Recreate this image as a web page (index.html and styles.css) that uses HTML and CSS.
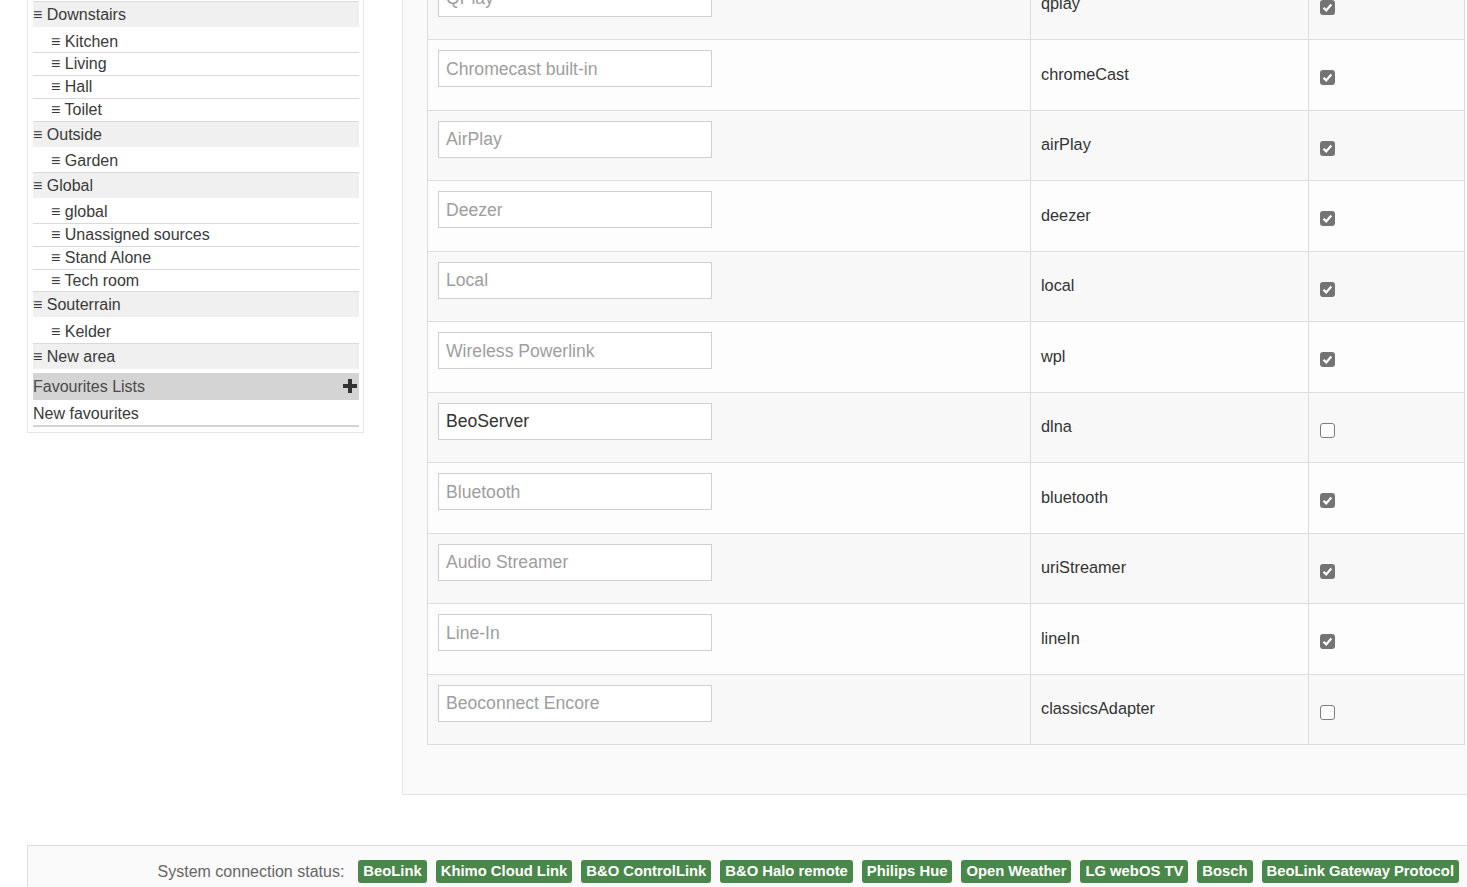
FILE: index.html
```html
<!DOCTYPE html>
<html lang="en">
<head>
<meta charset="utf-8">
<title>Sources</title>
<link rel="stylesheet" href="styles.css">
</head>
<body>
<div class="page">
  <div class="top">
    <aside class="sidebar">
      <ul class="areas">
        <li class="area">
          <div class="area-head">≡ Downstairs</div>
          <ul class="zones">
            <li>≡ Kitchen</li>
            <li>≡ Living</li>
            <li>≡ Hall</li>
            <li>≡ Toilet</li>
          </ul>
        </li>
        <li class="area">
          <div class="area-head">≡ Outside</div>
          <ul class="zones">
            <li>≡ Garden</li>
          </ul>
        </li>
        <li class="area">
          <div class="area-head">≡ Global</div>
          <ul class="zones">
            <li>≡ global</li>
            <li>≡ Unassigned sources</li>
            <li>≡ Stand Alone</li>
            <li>≡ Tech room</li>
          </ul>
        </li>
        <li class="area">
          <div class="area-head">≡ Souterrain</div>
          <ul class="zones">
            <li>≡ Kelder</li>
          </ul>
        </li>
        <li class="area">
          <div class="area-head">≡ New area</div>
        </li>
      </ul>
      <div class="fav-head">
        <span>Favourites Lists</span>
        <svg class="plus" width="14" height="14" viewBox="0 0 14 14"><rect x="5" y="0" width="4" height="14" fill="#333"/><rect x="0" y="5" width="14" height="4" fill="#333"/></svg>
      </div>
      <div class="fav-item">New favourites</div>
    </aside>

    <main class="content">
      <div class="src-table">
        <div class="src-row">
          <div class="cell name"><input class="field" type="text" placeholder="QPlay"></div>
          <div class="cell key">qplay</div>
          <div class="cell chk"><span class="check on"><svg width="15" height="15" viewBox="0 0 15 15"><path d="M3.5 7.8 L6.2 10.4 L11.3 4.6" fill="none" stroke="#fff" stroke-width="2.2"/></svg></span></div>
        </div>
        <div class="src-row">
          <div class="cell name"><input class="field" type="text" placeholder="Chromecast built-in"></div>
          <div class="cell key">chromeCast</div>
          <div class="cell chk"><span class="check on"><svg width="15" height="15" viewBox="0 0 15 15"><path d="M3.5 7.8 L6.2 10.4 L11.3 4.6" fill="none" stroke="#fff" stroke-width="2.2"/></svg></span></div>
        </div>
        <div class="src-row">
          <div class="cell name"><input class="field" type="text" placeholder="AirPlay"></div>
          <div class="cell key">airPlay</div>
          <div class="cell chk"><span class="check on"><svg width="15" height="15" viewBox="0 0 15 15"><path d="M3.5 7.8 L6.2 10.4 L11.3 4.6" fill="none" stroke="#fff" stroke-width="2.2"/></svg></span></div>
        </div>
        <div class="src-row">
          <div class="cell name"><input class="field" type="text" placeholder="Deezer"></div>
          <div class="cell key">deezer</div>
          <div class="cell chk"><span class="check on"><svg width="15" height="15" viewBox="0 0 15 15"><path d="M3.5 7.8 L6.2 10.4 L11.3 4.6" fill="none" stroke="#fff" stroke-width="2.2"/></svg></span></div>
        </div>
        <div class="src-row">
          <div class="cell name"><input class="field" type="text" placeholder="Local"></div>
          <div class="cell key">local</div>
          <div class="cell chk"><span class="check on"><svg width="15" height="15" viewBox="0 0 15 15"><path d="M3.5 7.8 L6.2 10.4 L11.3 4.6" fill="none" stroke="#fff" stroke-width="2.2"/></svg></span></div>
        </div>
        <div class="src-row">
          <div class="cell name"><input class="field" type="text" placeholder="Wireless Powerlink"></div>
          <div class="cell key">wpl</div>
          <div class="cell chk"><span class="check on"><svg width="15" height="15" viewBox="0 0 15 15"><path d="M3.5 7.8 L6.2 10.4 L11.3 4.6" fill="none" stroke="#fff" stroke-width="2.2"/></svg></span></div>
        </div>
        <div class="src-row">
          <div class="cell name"><input class="field" type="text" value="BeoServer"></div>
          <div class="cell key">dlna</div>
          <div class="cell chk"><span class="check off"></span></div>
        </div>
        <div class="src-row">
          <div class="cell name"><input class="field" type="text" placeholder="Bluetooth"></div>
          <div class="cell key">bluetooth</div>
          <div class="cell chk"><span class="check on"><svg width="15" height="15" viewBox="0 0 15 15"><path d="M3.5 7.8 L6.2 10.4 L11.3 4.6" fill="none" stroke="#fff" stroke-width="2.2"/></svg></span></div>
        </div>
        <div class="src-row">
          <div class="cell name"><input class="field" type="text" placeholder="Audio Streamer"></div>
          <div class="cell key">uriStreamer</div>
          <div class="cell chk"><span class="check on"><svg width="15" height="15" viewBox="0 0 15 15"><path d="M3.5 7.8 L6.2 10.4 L11.3 4.6" fill="none" stroke="#fff" stroke-width="2.2"/></svg></span></div>
        </div>
        <div class="src-row">
          <div class="cell name"><input class="field" type="text" placeholder="Line-In"></div>
          <div class="cell key">lineIn</div>
          <div class="cell chk"><span class="check on"><svg width="15" height="15" viewBox="0 0 15 15"><path d="M3.5 7.8 L6.2 10.4 L11.3 4.6" fill="none" stroke="#fff" stroke-width="2.2"/></svg></span></div>
        </div>
        <div class="src-row">
          <div class="cell name"><input class="field" type="text" placeholder="Beoconnect Encore"></div>
          <div class="cell key">classicsAdapter</div>
          <div class="cell chk"><span class="check off"></span></div>
        </div>
      </div>
    </main>
  </div>

  <footer class="status">
    <span class="status-label">System connection status:</span>
    <span class="badge">BeoLink</span>
    <span class="badge">Khimo Cloud Link</span>
    <span class="badge">B&amp;O ControlLink</span>
    <span class="badge">B&amp;O Halo remote</span>
    <span class="badge">Philips Hue</span>
    <span class="badge">Open Weather</span>
    <span class="badge">LG webOS TV</span>
    <span class="badge">Bosch</span>
    <span class="badge">BeoLink Gateway Protocol</span>
  </footer>
</div>
</body>
</html>
```

FILE: styles.css
```css
html, body {
  margin: 0;
  padding: 0;
  overflow: hidden;
  background: #fff;
}

body {
  font-family: "Liberation Sans", Arial, Helvetica, sans-serif;
  font-size: 16px;
  color: #333;
  width: 1467px;
  height: 887px;
}

.page {
  width: 1467px;
}

/* page is scrolled: top part hidden above the viewport */
.top {
  display: flex;
  align-items: flex-start;
  margin-top: -60px;
  padding-left: 27px;
  gap: 38px;
}

/* ---------- sidebar ---------- */
.sidebar {
  flex: none;
  width: 337px;
  box-sizing: border-box;
  border: 1px solid #e6e6e6;
  padding: 60px 4px 5px 5px;
  background: #fff;
}

.areas, .zones {
  list-style: none;
  margin: 0;
  padding: 0;
}

.areas {
  border-top: 1px solid #dcdcdc;
}

.area-head {
  height: 25px;
  line-height: 25px;
  background: #f0f0f0;
  color: #3a3a3a;
  white-space: nowrap;
}

.zones {
  padding-top: 3.5px;
}

.zones li {
  height: 22.75px;
  box-sizing: border-box;
  line-height: 21px;
  padding-left: 18px;
  border-bottom: 1px solid #d9d9d9;
  color: #3a3a3a;
  white-space: nowrap;
}

.fav-head {
  margin-top: 4px;
  height: 27px;
  background: #d4d4d4;
  display: flex;
  align-items: center;
  justify-content: space-between;
  padding-right: 2px;
  padding-top: 2px;
  box-sizing: border-box;
  color: #4a4a4a;
}

.plus {
  display: block;
  margin-top: -2px;
}

.fav-item {
  height: 25px;
  line-height: 27px;
  border-bottom: 2px solid #d4d4d4;
  color: #3a3a3a;
}

/* ---------- main content ---------- */
.content {
  flex: none;
  width: 1088px;
  box-sizing: border-box;
  border: 1px solid #e3e3e3;
  background: #fafafa;
  padding: 27.5px 24px 48.5px 24px;
}

.src-table {
  width: 1038px;
  box-sizing: border-box;
  border-left: 1px solid #ddd;
  border-right: 1px solid #ddd;
  border-bottom: 1px solid #ddd;
}

.src-row {
  display: grid;
  grid-template-columns: 602px 278px 156px;
  height: 70.5px;
  box-sizing: border-box;
  border-top: 1px solid #ddd;
  background: #fdfdfd;
}

.src-row:nth-child(odd) {
  background: #f8f8f8;
}

.cell {
  box-sizing: border-box;
}

.cell + .cell {
  border-left: 1px solid #ddd;
}

.name {
  padding: 10px 10px 0 10px;
}

.field {
  display: block;
  width: 274px;
  height: 37px;
  box-sizing: border-box;
  margin: 0;
  border: 1px solid #cfcfcf;
  border-radius: 0;
  padding: 1px 7px 0 7px;
  background: #fff;
  font-family: "Liberation Sans", Arial, Helvetica, sans-serif;
  font-size: 17.6px;
  color: #333;
  outline: none;
}

.field::placeholder {
  color: #9e9e9e;
  opacity: 1;
}

.key {
  display: flex;
  align-items: center;
  padding: 0 10px 1px 10px;
  font-size: 16.3px;
  color: #333;
}

.chk {
  display: flex;
  align-items: center;
  padding: 6px 0 0 11px;
}

.check {
  display: block;
  width: 15px;
  height: 15px;
  box-sizing: border-box;
  border-radius: 3px;
}

.check svg {
  display: block;
}

.check.on {
  background: #747474;
}

.check.off {
  background: #fff;
  border: 1px solid #7d7d7d;
}

/* ---------- footer ---------- */
.status {
  margin: 50px 0 0 27px;
  border-top: 1px solid #dedede;
  border-left: 1px solid #dedede;
  background: #fafafa;
  display: flex;
  align-items: center;
  justify-content: flex-end;
  gap: 9px;
  padding: 14px 8px 12px 0;
}

.status-label {
  color: #666;
  margin-right: 5px;
  font-size: 16px;
  line-height: 23px;
}

.badge {
  display: inline-block;
  height: 23px;
  line-height: 23px;
  padding: 0 5px;
  background: #4a874a;
  color: #fff;
  font-weight: bold;
  font-size: 14.8px;
  border-radius: 3px;
  white-space: nowrap;
}
```
